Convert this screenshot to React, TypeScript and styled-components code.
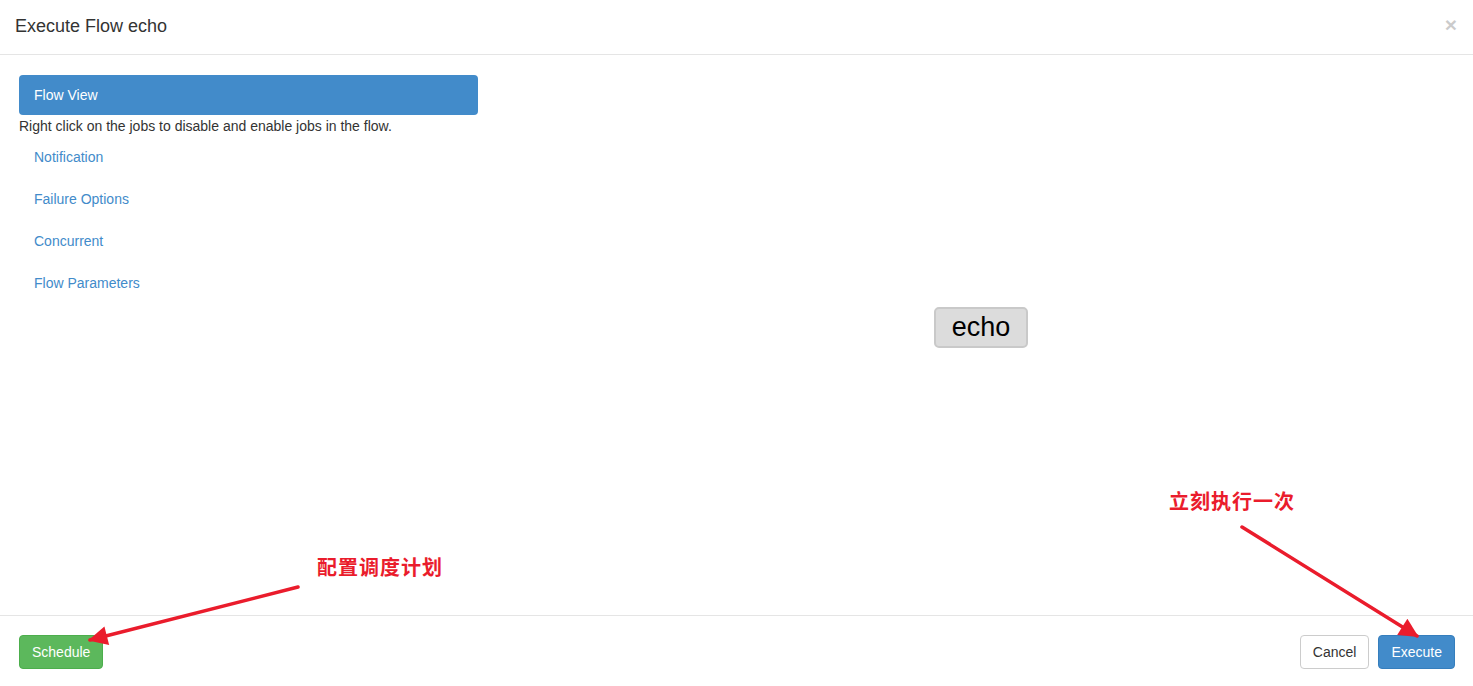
import React from "react";
import styled, { createGlobalStyle } from "styled-components";

const Global = createGlobalStyle`
  html, body { margin: 0; padding: 0; background: #fff; }
  body { font-family: "Liberation Sans", Arial, sans-serif; color: #333; }
  * { box-sizing: border-box; }
`;

const Page = styled.div`
  position: relative;
  width: 1473px;
  height: 686px;
  display: flex;
  flex-direction: column;
  overflow: hidden;
`;

const Header = styled.div`
  height: 55px;
  flex: none;
  border-bottom: 1px solid #e5e5e5;
  display: flex;
  align-items: center;
  justify-content: space-between;
  padding: 0 15px 0 15px;
`;

const Title = styled.h4`
  margin: 0;
  font-size: 18px;
  font-weight: 400;
  color: #333;
  line-height: 1.42857;
`;

const Close = styled.button`
  border: 0;
  background: none;
  padding: 0;
  font-family: "Liberation Sans", Arial, sans-serif;
  font-size: 21px;
  font-weight: 700;
  line-height: 1;
  color: #000;
  opacity: 0.2;
  margin-top: -6px;
  margin-right: 1px;
  cursor: pointer;
`;

const Body = styled.div`
  flex: 1;
  display: flex;
  padding: 20px 0 0 19px;
`;

const Sidebar = styled.ul`
  list-style: none;
  margin: 0;
  padding: 0;
  width: 459px;
  flex: none;
  display: flex;
  flex-direction: column;
`;

const Pill = styled.li<{ $active?: boolean }>`
  height: 40px;
  line-height: 40px;
  padding: 0 15px;
  border-radius: 4px;
  font-size: 14px;
  color: ${(p) => (p.$active ? "#fff" : "#428bca")};
  background: ${(p) => (p.$active ? "#428bca" : "transparent")};
  margin-top: ${(p) => (p.$active ? "0" : "2px")};
  cursor: pointer;
`;

const Hint = styled.li`
  font-size: 14px;
  line-height: 20px;
  color: #333;
  padding-top: 1px;
  margin-bottom: -1px;
`;

const Canvas = styled.div`
  position: relative;
  flex: 1;
`;

const JobNode = styled.div`
  position: absolute;
  width: 94px;
  height: 41px;
  background: #dcdcdc;
  border: 2px solid #c9c9c9;
  border-radius: 5px;
  display: flex;
  align-items: center;
  justify-content: center;
  font-size: 27px;
  color: #000;
`;

const Footer = styled.div`
  flex: none;
  height: 71px;
  border-top: 1px solid #e5e5e5;
  display: flex;
  align-items: flex-start;
  justify-content: space-between;
  padding: 19px 18px 0 19px;
`;

const Group = styled.div`
  display: flex;
  gap: 9px;
`;

const Btn = styled.button<{ $variant: "success" | "default" | "primary" }>`
  height: 34px;
  padding: 0 12px;
  font-family: "Liberation Sans", Arial, sans-serif;
  font-size: 14px;
  line-height: 20px;
  border-radius: 4px;
  border: 1px solid
    ${(p) =>
      p.$variant === "success" ? "#4cae4c" : p.$variant === "primary" ? "#357ebd" : "#ccc"};
  background: ${(p) =>
    p.$variant === "success" ? "#5cb85c" : p.$variant === "primary" ? "#428bca" : "#fff"};
  color: ${(p) => (p.$variant === "default" ? "#333" : "#fff")};
  cursor: pointer;
`;

const Overlay = styled.svg`
  position: absolute;
  left: 0;
  top: 0;
  width: 1473px;
  height: 686px;
  pointer-events: none;
`;

const Note = styled.div`
  position: absolute;
  font-family: "Noto Sans CJK SC", sans-serif;
  font-weight: 700;
  font-size: 20px;
  line-height: 1;
  letter-spacing: 1px;
  color: #ea1c2c;
  white-space: nowrap;
`;

const links = ["Notification", "Failure Options", "Concurrent", "Flow Parameters"];

export default function App() {
  return (
    <>
      <Global />
      <Page>
        <Header>
          <Title>Execute Flow echo</Title>
          <Close aria-label="Close">×</Close>
        </Header>
        <Body>
          <Sidebar>
            <Pill $active>Flow View</Pill>
            <Hint>Right click on the jobs to disable and enable jobs in the flow.</Hint>
            {links.map((l) => (
              <Pill key={l}>{l}</Pill>
            ))}
          </Sidebar>
          <Canvas>
            <JobNode style={{ left: 456, top: 232 }}>echo</JobNode>
          </Canvas>
        </Body>
        <Footer>
          <Btn $variant="success">Schedule</Btn>
          <Group>
            <Btn $variant="default">Cancel</Btn>
            <Btn $variant="primary">Execute</Btn>
          </Group>
        </Footer>
        <Overlay viewBox="0 0 1473 686">
          <defs>
            <marker
              id="head"
              viewBox="0 0 10 10"
              refX="9"
              refY="5"
              markerWidth="6.5"
              markerHeight="5.5"
              markerUnits="strokeWidth"
              orient="auto"
            >
              <path d="M0 0 L10 5 L0 10 Z" fill="#ea1c2c" />
            </marker>
          </defs>
          <line
            x1="298"
            y1="587"
            x2="90"
            y2="640"
            stroke="#ea1c2c"
            strokeWidth="3.5"
            strokeLinecap="round"
            markerEnd="url(#head)"
          />
          <line
            x1="1242"
            y1="527"
            x2="1417"
            y2="636"
            stroke="#ea1c2c"
            strokeWidth="3.5"
            strokeLinecap="round"
            markerEnd="url(#head)"
          />
        </Overlay>
        <Note style={{ left: 317, top: 557 }}>配置调度计划</Note>
        <Note style={{ left: 1169, top: 491 }}>立刻执行一次</Note>
      </Page>
    </>
  );
}
